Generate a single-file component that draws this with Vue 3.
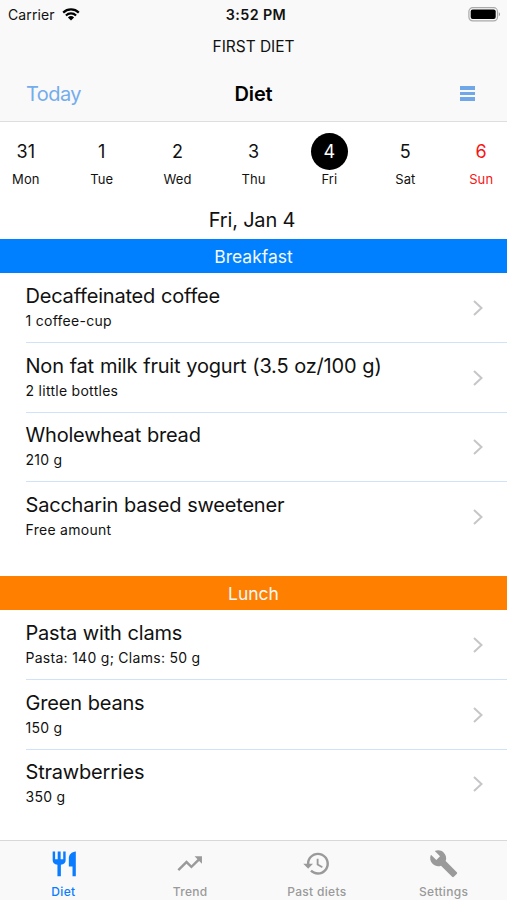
<script setup>
const days = [
  { num: '31', name: 'Mon' },
  { num: '1', name: 'Tue' },
  { num: '2', name: 'Wed' },
  { num: '3', name: 'Thu' },
  { num: '4', name: 'Fri', selected: true },
  { num: '5', name: 'Sat' },
  { num: '6', name: 'Sun', holiday: true },
]

const meals = [
  {
    name: 'Breakfast',
    tone: 'blue',
    foods: [
      { title: 'Decaffeinated coffee', amount: '1 coffee-cup' },
      { title: 'Non fat milk fruit yogurt (3.5 oz/100 g)', amount: '2 little bottles' },
      { title: 'Wholewheat bread', amount: '210 g' },
      { title: 'Saccharin based sweetener', amount: 'Free amount' },
    ],
  },
  {
    name: 'Lunch',
    tone: 'orange',
    foods: [
      { title: 'Pasta with clams', amount: 'Pasta: 140 g; Clams: 50 g' },
      { title: 'Green beans', amount: '150 g' },
      { title: 'Strawberries', amount: '350 g' },
    ],
  },
]

const tabs = [
  {
    label: 'Diet',
    active: true,
    icon: 'M3 2h2v6.300h2.100V2h2.400v6.300h2.100V2h2v7.200c0 2-1.300 3.300-3.900 3.600v9.500H6.900v-9.500C4.300 12.500 3 11.200 3 9.200zM21.900 2v20.300h-2.700v-8.100h-3V7.500c0-2.900 2.300-5.300 5.700-5.500z',
  },
  { label: 'Trend', icon: 'M16 6l2.290 2.290-4.880 4.880-4-4L2 16.590 3.410 18l6-6 4 4 6.300-6.290L22 12V6z' },
  {
    label: 'Past diets',
    icon: 'M13 3c-4.970 0-9 4.030-9 9H1l3.890 3.890.07.14L9 12H6c0-3.870 3.130-7 7-7s7 3.130 7 7-3.130 7-7 7c-1.930 0-3.680-.79-4.940-2.060l-1.420 1.420C8.270 19.990 10.510 21 13 21c4.970 0 9-4.030 9-9s-4.030-9-9-9zm-1 5v5l4.280 2.540.72-1.210-3.500-2.080V8H12z',
  },
  {
    label: 'Settings',
    icon: 'M22.700 19l-9.100-9.100c.9-2.300.4-5-1.500-6.900-2-2-5-2.400-7.400-1.300L9 6 6 9 1.600 4.700C.4 7.100.9 10.100 2.900 12.100c1.900 1.900 4.600 2.400 6.900 1.500l9.100 9.100c.4.4 1 .4 1.400 0l2.300-2.300c.5-.4.5-1.100.1-1.400z',
  },
]
</script>

<template>
  <div class="screen">
    <header class="top">
      <div class="status">
        <div class="carrier">
          <span>Carrier</span>
          <svg class="wifi" viewBox="0 0 18 13">
            <path d="M1.200 4.600a11.200 11.200 0 0 1 15.600 0" />
            <path d="M3.900 7.500a7.400 7.400 0 0 1 10.200 0" />
            <path class="dot" d="M5.900 9.400a4.600 4.600 0 0 1 6.200 0L9 12.500z" />
          </svg>
        </div>
        <div class="clock">3:52 PM</div>
        <svg class="battery" viewBox="0 0 33 15">
          <rect class="shell" x="0.900" y="0.700" width="28.600" height="13.200" rx="3.800" />
          <rect class="charge" x="2.700" y="2.500" width="25" height="9.600" rx="2" />
          <path class="cap" d="M30.800 5.300c1.600.8 1.600 3.200 0 4z" />
        </svg>
      </div>
      <div class="plan">FIRST DIET</div>
      <nav class="navbar">
        <span class="today">Today</span>
        <h1 class="title">Diet</h1>
        <div class="menu"><i></i><i></i><i></i></div>
      </nav>
    </header>

    <main class="content">
      <div class="week">
        <div
          v-for="d in days"
          :key="d.name"
          class="day"
          :class="{ selected: d.selected, holiday: d.holiday }"
        >
          <span class="num">{{ d.num }}</span>
          <span class="dayname">{{ d.name }}</span>
        </div>
      </div>
      <div class="date">Fri, Jan 4</div>

      <section v-for="m in meals" :key="m.name" class="meal">
        <h2 class="mealname" :class="m.tone">{{ m.name }}</h2>
        <ul class="foods">
          <li v-for="f in m.foods" :key="f.title" class="food">
            <div class="text">
              <div class="foodtitle">{{ f.title }}</div>
              <div class="amount">{{ f.amount }}</div>
            </div>
            <svg class="chevron" viewBox="0 0 10 16"><path d="M1 1l7.500 7L1 15" /></svg>
          </li>
        </ul>
      </section>
    </main>

    <footer class="tabbar">
      <div v-for="t in tabs" :key="t.label" class="tab" :class="{ active: t.active }">
        <svg viewBox="0 0 24 24"><path :d="t.icon" /></svg>
        <span>{{ t.label }}</span>
      </div>
    </footer>
  </div>
</template>

<style>
body {
  background: #fff;
}
</style>

<style scoped>
.screen {
  display: flex;
  flex-direction: column;
  width: 507px;
  height: 900px;
  overflow: hidden;
  background: #fff;
  color: #111;
  font-family: Inter, "Liberation Sans", sans-serif;
}
.top {
  flex: none;
  box-sizing: border-box;
  height: 122px;
  background: #f9f9f9;
  border-bottom: 1px solid #dedede;
}
.status {
  display: grid;
  grid-template-columns: 1fr auto 1fr;
  align-items: center;
  height: 28px;
  padding: 0 6px 0 8px;
  font-size: 14px;
}
.carrier {
  display: flex;
  align-items: center;
  gap: 7px;
  letter-spacing: 0.1px;
}
.wifi {
  width: 18px;
  height: 13px;
  fill: none;
  stroke: #000;
  stroke-width: 2.2;
}
.wifi .dot {
  fill: #000;
  stroke: none;
}
.clock {
  padding-left: 3px;
  font-weight: 600;
  font-size: 14.3px;
  letter-spacing: 0.4px;
}
.battery {
  justify-self: end;
  width: 33px;
  height: 15px;
}
.shell {
  fill: none;
  stroke: #aaa;
  stroke-width: 1.2;
}
.charge {
  fill: #000;
}
.cap {
  fill: #999;
}
.plan {
  height: 38px;
  line-height: 38px;
  text-align: center;
  font-size: 15.5px;
  letter-spacing: -0.05px;
}
.navbar {
  display: grid;
  grid-template-columns: 1fr auto 1fr;
  align-items: center;
  height: 55px;
  padding: 0 26px;
}
.today {
  color: #74acec;
  font-size: 20px;
  letter-spacing: -0.55px;
}
.title {
  margin: 0;
  color: #000;
  font-size: 20px;
  font-weight: 600;
  letter-spacing: -0.1px;
}
.menu {
  display: flex;
  flex-direction: column;
  justify-self: end;
  gap: 2px;
  width: 15px;
  margin-right: 6px;
}
.menu i {
  height: 3.7px;
  background: #70a7e8;
}
.content {
  flex: 1;
  min-height: 0;
}
.week {
  display: grid;
  grid-template-columns: repeat(7, 75.9px);
  justify-content: center;
  height: 80px;
  padding-top: 11px;
  box-sizing: border-box;
}
.day {
  display: flex;
  flex-direction: column;
  align-items: center;
}
.num {
  width: 37px;
  height: 37px;
  border-radius: 50%;
  line-height: 38px;
  text-align: center;
  font-size: 18px;
}
.dayname {
  height: 18px;
  line-height: 18px;
  font-size: 13px;
  letter-spacing: 0.1px;
}
.selected .num {
  background: #000;
  color: #fff;
}
.holiday {
  color: #f81414;
}
.date {
  height: 37px;
  padding-right: 3px;
  line-height: 37px;
  text-align: center;
  font-size: 20px;
  letter-spacing: -0.2px;
}
.meal {
  height: 337px;
}
.mealname {
  height: 34px;
  margin: 0;
  line-height: 35px;
  text-align: center;
  color: #f4f8fc;
  font-size: 17.5px;
  font-weight: 400;
}
.blue {
  background: #0080ff;
}
.orange {
  background: #ff8000;
}
.foods {
  margin: 0;
  padding: 0.5px 0 0 25.5px;
  list-style: none;
}
.food {
  display: flex;
  align-items: center;
  justify-content: space-between;
  box-sizing: border-box;
  height: 69.6px;
  padding-right: 24px;
  border-bottom: 1px solid #cfe2f8;
}
.food:last-child {
  border-bottom-color: transparent;
}
.foodtitle {
  height: 26px;
  line-height: 26px;
  font-size: 20px;
  letter-spacing: -0.2px;
  word-spacing: 0.5px;
  white-space: nowrap;
}
.amount {
  height: 23px;
  line-height: 23px;
  font-size: 14px;
  letter-spacing: 0.28px;
}
.chevron {
  width: 10px;
  height: 16px;
  margin-top: 1px;
  fill: none;
  stroke: #c6c6c9;
  stroke-width: 2;
}
.tabbar {
  display: flex;
  flex: none;
  box-sizing: border-box;
  height: 60px;
  padding-top: 8px;
  background: #f9f9f9;
  border-top: 1px solid #d8d8d8;
}
.tab {
  display: flex;
  flex: 1;
  flex-direction: column;
  align-items: center;
  color: #9a9a9a;
  font-size: 12px;
  font-weight: 500;
}
.tab svg {
  width: 29.4px;
  height: 29.4px;
  fill: currentColor;
}
.tab span {
  height: 14px;
  margin-top: 7px;
  line-height: 14px;
  letter-spacing: 0.3px;
}
.active {
  color: #0a7cff;
}
</style>
